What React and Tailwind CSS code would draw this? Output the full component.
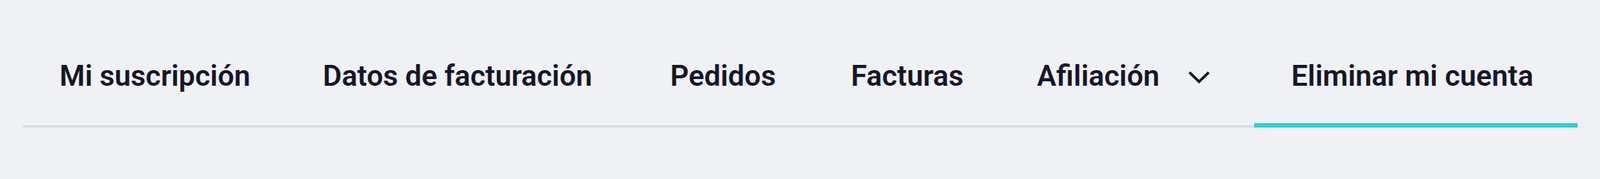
import React from 'react'

const tabs = [
	{ label: 'Mi suscripción', width: 'w-[354px]' },
	{ label: 'Datos de facturación', width: 'w-[467px]' },
	{ label: 'Pedidos', width: 'w-[243px]' },
	{ label: 'Facturas', width: 'w-[250px]' },
	{ label: 'Afiliación', width: 'w-[342px]', dropdown: true },
	{ label: 'Eliminar mi cuenta', width: 'flex-1', active: true },
]

function Chevron() {
	return (
		<svg width="30" height="17" viewBox="0 0 30 17" fill="none" className="ml-[38px] mt-[1px]">
			<path d="M2 2 L15 14.5 L28 2" stroke="#161629" strokeWidth="3.6" />
		</svg>
	)
}

export default function App() {
	return (
		<div className="w-full min-h-screen bg-[#f0f1f5] pt-[62px] pl-[30px]">
			<nav className="flex w-[2091px] border-b-[3px] border-[#dddde8]">
				{tabs.map((tab) => (
					<button
						key={tab.label}
						className={
							'flex items-center pl-[50px] pb-[22px] h-[109px] -mb-[3px] text-[39px] leading-none font-semibold text-[#161629] whitespace-nowrap border-b-[6px] ' +
							tab.width +
							(tab.active ? ' border-[#2ad4d4]' : ' border-transparent')
						}
						style={{ fontFamily: 'Roboto, sans-serif' }}
					>
						{tab.label}
						{tab.dropdown && <Chevron />}
					</button>
				))}
			</nav>
		</div>
	)
}
